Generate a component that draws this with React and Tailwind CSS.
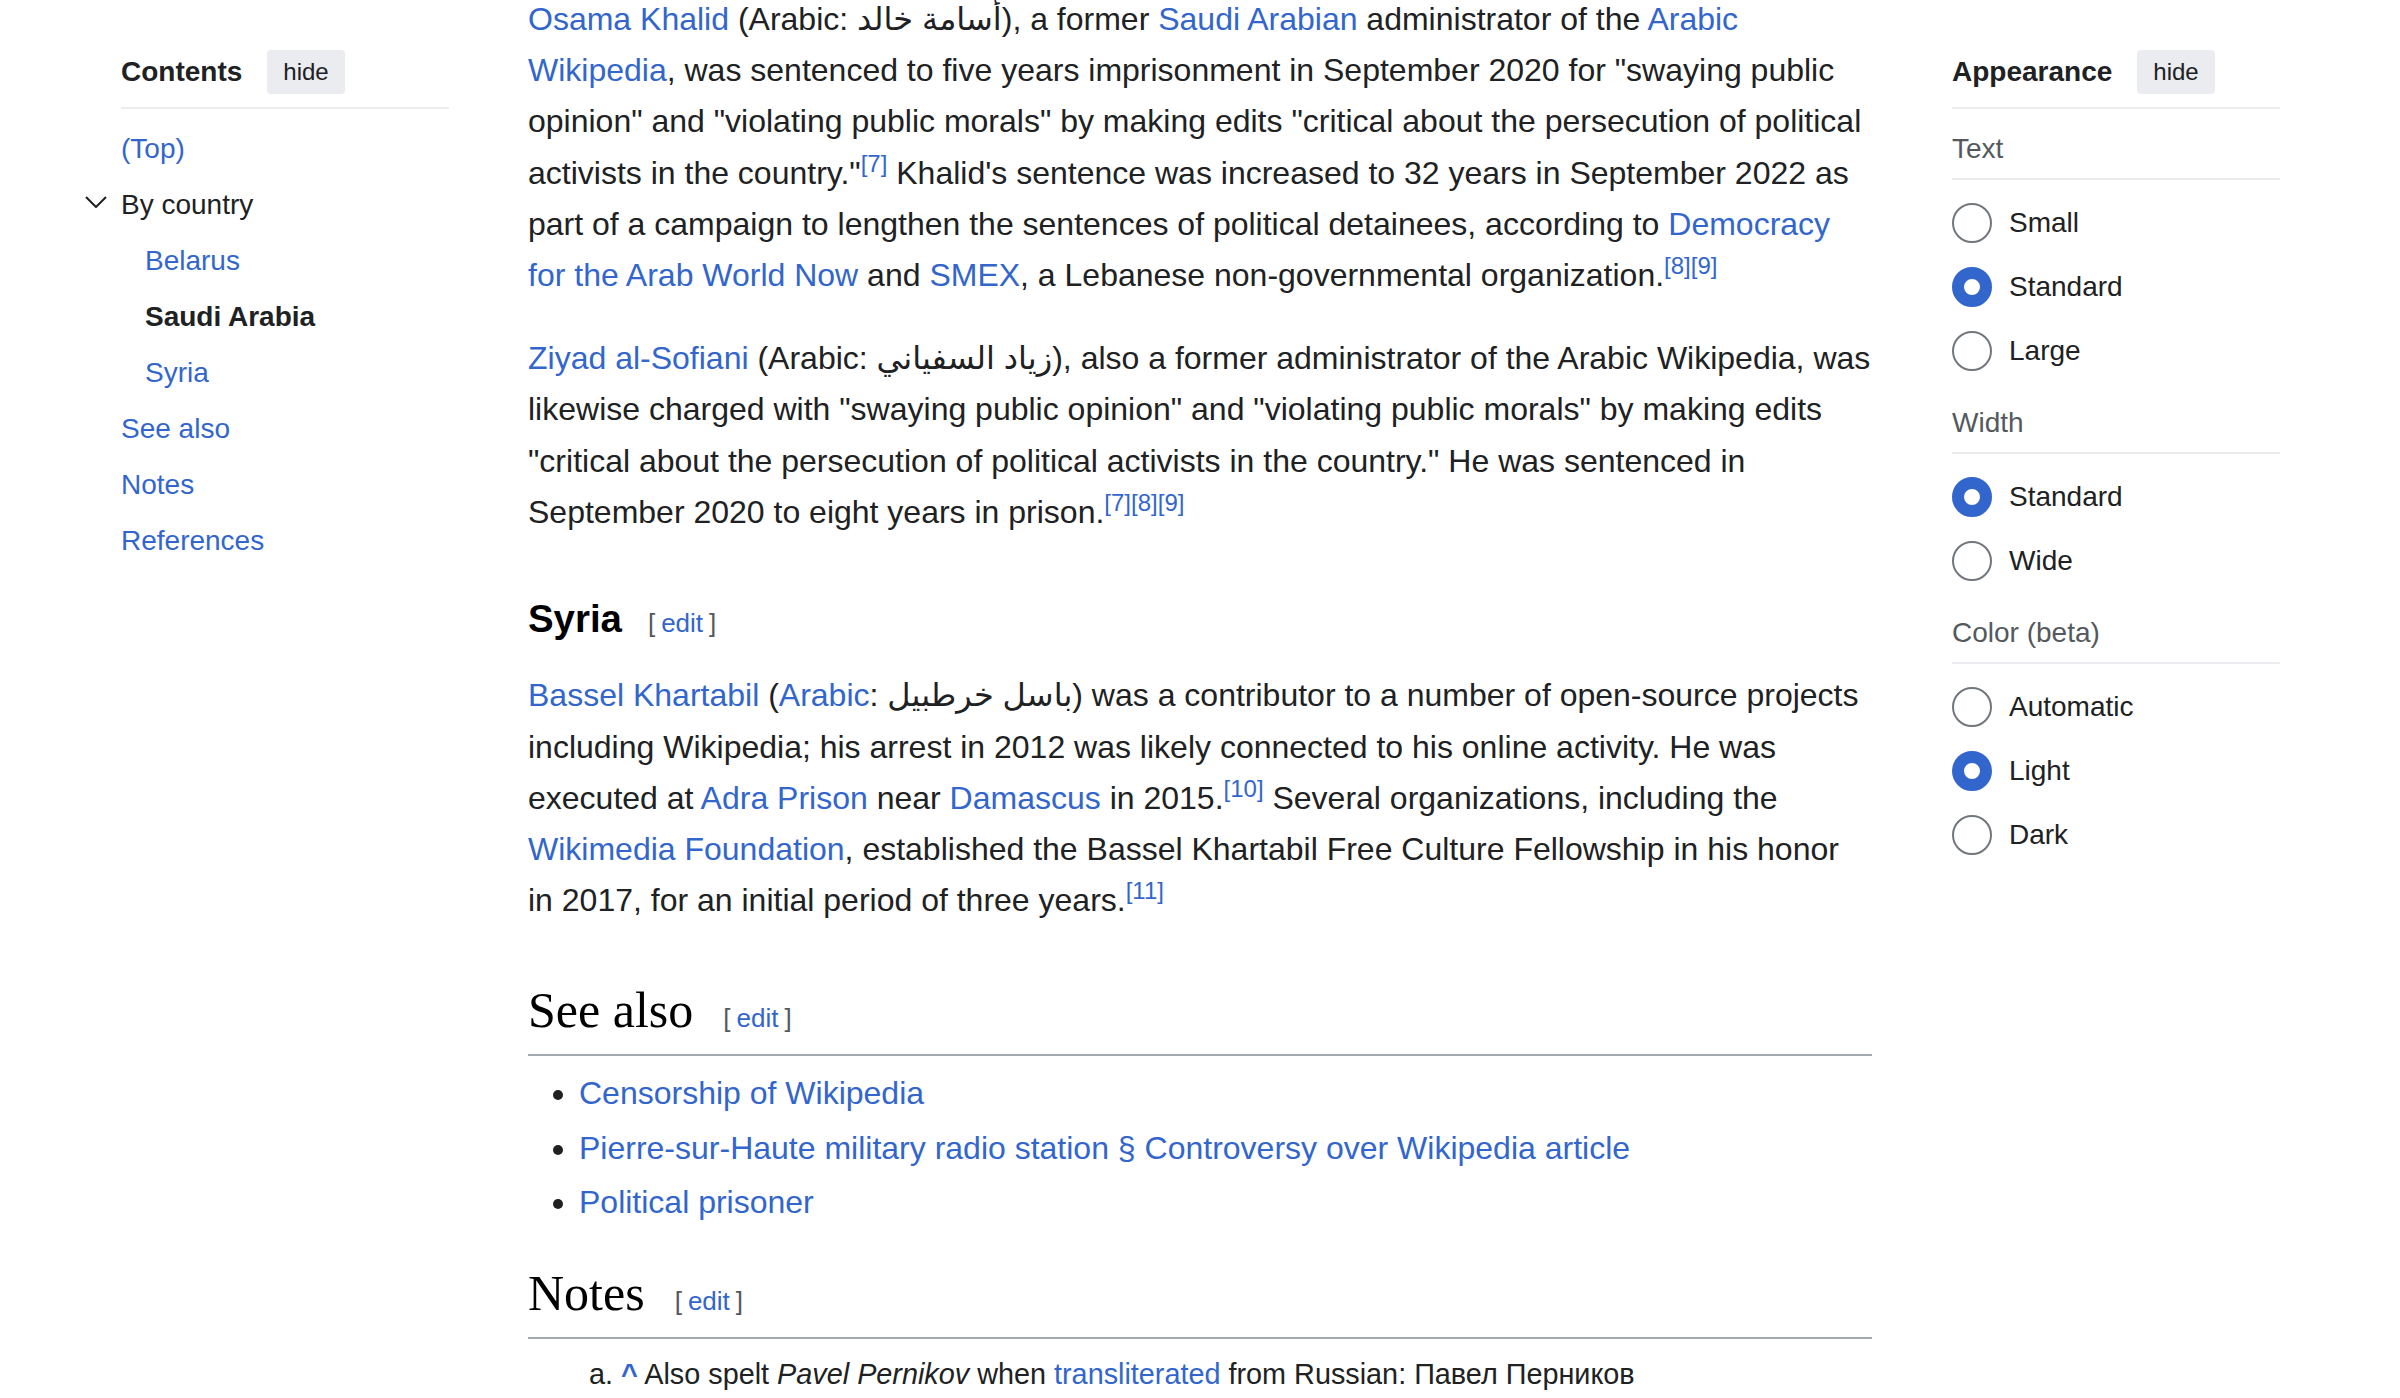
import React from 'react';

const A = ({ children, className = '' }) => (
  <a href="#" className={`text-[#3366cc] ${className}`}>{children}</a>
);

const Ref = ({ children }) => (
  <sup><a href="#" className="text-[#3366cc]">{children}</a></sup>
);

const Ar = ({ children }) => (
  <span lang="ar" dir="rtl">{children}</span>
);

const Edit = ({ gap = 'ml-[26px]' }) => (
  <span className={`${gap} text-[26px] font-normal text-[#54595d] font-['Liberation_Sans',sans-serif] whitespace-nowrap`}>
    <span className="mr-[6px]">[</span>
    <A>edit</A>
    <span className="ml-[6px]">]</span>
  </span>
);

const PanelHeader = ({ title }) => (
  <div className="mt-[50px] pb-[13px] border-b-2 border-[#eaecf0]">
    <div className="flex items-center h-[44px] gap-[25px]">
      <span className="text-[28px] font-bold text-[#202122]">{title}</span>
      <button className="h-[44px] px-[16px] rounded-[4px] bg-[#eaecf0] text-[24px] text-[#202122]">hide</button>
    </div>
  </div>
);

const Radio = ({ label, checked }) => (
  <div className="flex items-center h-[64px]">
    {checked ? (
      <span className="w-[40px] h-[40px] rounded-full border-[12px] border-[#3366cc] bg-white shrink-0" />
    ) : (
      <span className="w-[40px] h-[40px] rounded-full border-2 border-[#72777d] bg-white shrink-0" />
    )}
    <span className="ml-[17px] text-[28px] text-[#202122]">{label}</span>
  </div>
);

const Group = ({ label, options, selected }) => (
  <div className="mt-[20px]">
    <div className="pb-[9px] border-b-2 border-[#eaecf0]">
      <div className="h-[40px] leading-[40px] text-[28px] text-[#54595d]">{label}</div>
    </div>
    <div className="mt-[11px]">
      {options.map((o) => (
        <Radio key={o} label={o} checked={o === selected} />
      ))}
    </div>
  </div>
);

const TocItem = ({ children, active }) => (
  <li className="h-[56px] flex items-center">
    {active ? <span className="font-bold text-[#202122]">{children}</span> : <A>{children}</A>}
  </li>
);

const H2 = ({ children, className = '' }) => (
  <h2 className={`font-['Liberation_Serif',serif] text-[50px] leading-[65px] font-normal text-black pb-[3px] border-b-2 border-[#a2a9b1] ${className}`}>
    {children}
    <Edit gap="ml-[30px]" />
  </h2>
);

export default function App() {
  return (
    <div className="h-[1398px] overflow-hidden bg-white font-['Liberation_Sans','DejaVu_Sans',sans-serif] text-[#202122]">
      <div className="flex items-start pl-[121px]">
        {/* table of contents */}
        <nav className="w-[328px] shrink-0">
          <PanelHeader title="Contents" />
          <ul className="mt-[12px] text-[28px]">
            <TocItem>(Top)</TocItem>
            <li>
              <div className="h-[56px] flex items-center -ml-[36px]">
                <svg viewBox="0 0 22 12" className="w-[22px] h-[12px] mr-[14px] -mt-[6px]" fill="none" stroke="#202122" strokeWidth="2">
                  <path d="M1 1 L11 11 L21 1" />
                </svg>
                <span>By country</span>
              </div>
              <ul className="pl-[24px]">
                <TocItem>Belarus</TocItem>
                <TocItem active>Saudi Arabia</TocItem>
                <TocItem>Syria</TocItem>
              </ul>
            </li>
            <TocItem>See also</TocItem>
            <TocItem>Notes</TocItem>
            <TocItem>References</TocItem>
          </ul>
        </nav>

        {/* article body */}
        <main className="w-[1344px] shrink-0 ml-[79px] -mt-[6px] text-[32px] leading-[51.2px]">
          <p className="mb-[32px]">
            <A>Osama Khalid</A> (Arabic: <Ar>أسامة خالد</Ar>), a former <A>Saudi Arabian</A> administrator of the <A>Arabic Wikipedia</A>, was sentenced to five years imprisonment in September 2020 for "swaying public opinion" and "violating public morals" by making edits "critical about the persecution of political activists in the country."<Ref>[7]</Ref> Khalid's sentence was increased to 32 years in September 2022 as part of a campaign to lengthen the sentences of political detainees, according to <A>Democracy for the Arab World Now</A> and <A>SMEX</A>, a Lebanese non-governmental organization.<Ref>[8]</Ref><Ref>[9]</Ref>
          </p>
          <p className="mb-[32px]">
            <A>Ziyad al-Sofiani</A> (Arabic: <Ar>زياد السفياني</Ar>), also a former administrator of the Arabic Wikipedia, was likewise charged with "swaying public opinion" and "violating public morals" by making edits "critical about the persecution of political activists in the country." He was sentenced in September 2020 to eight years in prison.<Ref>[7]</Ref><Ref>[8]</Ref><Ref>[9]</Ref>
          </p>

          <h3 className="mt-[50px] mb-[16px] text-[38.4px] leading-[61.4px] font-bold text-black">
            Syria
            <Edit />
          </h3>
          <p className="mb-[32px]">
            <A>Bassel Khartabil</A> (<A>Arabic</A>: <Ar>باسل خرطبيل</Ar>) was a contributor to a number of open-source projects including Wikipedia; his arrest in 2012 was likely connected to his online activity. He was executed at <A>Adra Prison</A> near <A>Damascus</A> in 2015.<Ref>[10]</Ref> Several organizations, including the <A>Wikimedia Foundation</A>, established the Bassel Khartabil Free Culture Fellowship in his honor in 2017, for an initial period of three years.<Ref>[11]</Ref>
          </p>

          <H2 className="mt-[52px]">See also</H2>
          <ul className="mt-[12px] pl-[51px] list-disc marker:text-[#202122]">
            <li className="mb-[3.2px]"><A>Censorship of Wikipedia</A></li>
            <li className="mb-[3.2px]"><A>Pierre-sur-Haute military radio station § Controversy over Wikipedia article</A></li>
            <li className="mb-[3.2px]"><A>Political prisoner</A></li>
          </ul>

          <H2 className="mt-[33px]">Notes</H2>
          <ol className="mt-[12px] pl-[93px] list-[lower-alpha] text-[28.8px] leading-[46px]">
            <li>
              <b><A>^</A></b> Also spelt <i>Pavel Pernikov</i> when <A>transliterated</A> from Russian: Павел Перников
            </li>
          </ol>
        </main>

        {/* appearance settings */}
        <aside className="w-[328px] shrink-0 ml-[80px]">
          <PanelHeader title="Appearance" />
          <Group label="Text" options={['Small', 'Standard', 'Large']} selected="Standard" />
          <Group label="Width" options={['Standard', 'Wide']} selected="Standard" />
          <Group label="Color (beta)" options={['Automatic', 'Light', 'Dark']} selected="Light" />
        </aside>
      </div>
    </div>
  );
}
